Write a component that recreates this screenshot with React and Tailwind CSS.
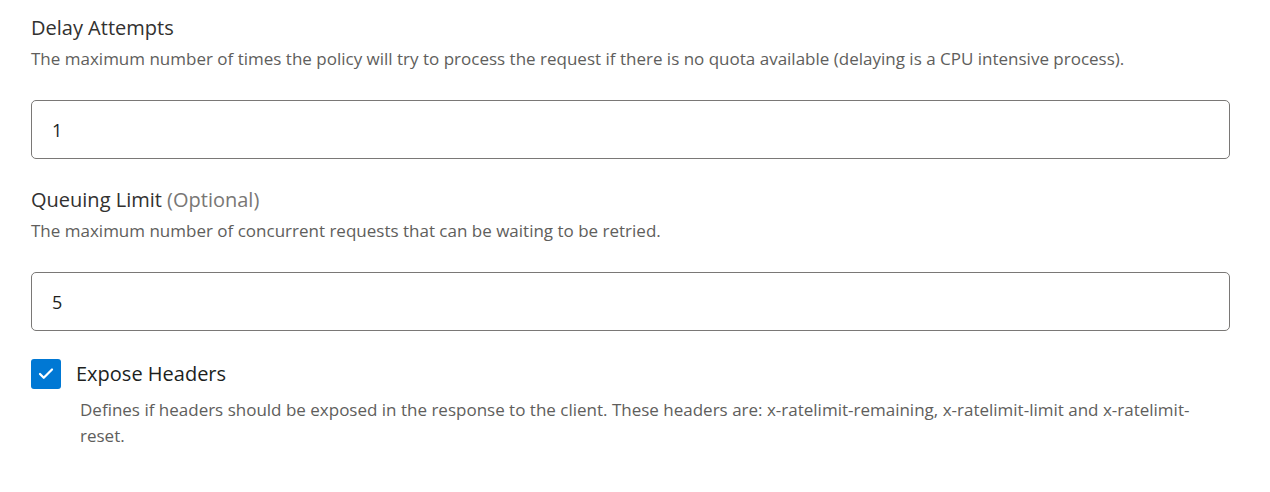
import { Check } from 'lucide-react';

const FONT = { fontFamily: '"Open Sans", "Noto Sans", sans-serif' };

function Field({ label, optional, help, value }) {
  return (
    <div className="flex flex-col">
      <label className="text-[20px] leading-[28px] text-[#323130]">
        {label}
        {optional && <span className="text-[#797775]"> (Optional)</span>}
      </label>
      <p className="mt-[4px] text-[17px] leading-[25px] text-[#605e5c]">{help}</p>
      <input
        readOnly
        value={value}
        className="mt-[29px] h-[59px] w-full rounded-[5px] border border-[#7a7876] bg-white px-[20px] text-[18px] text-[#201f1e] outline-none"
      />
    </div>
  );
}

export default function App() {
  return (
    <div className="min-h-[492px] bg-white pl-[31px] pr-[40px] pt-[14px]" style={FONT}>
      <Field
        label="Delay Attempts"
        help="The maximum number of times the policy will try to process the request if there is no quota available (delaying is a CPU intensive process)."
        value="1"
      />
      <div className="mt-[27px]">
        <Field
          label="Queuing Limit"
          optional
          help="The maximum number of concurrent requests that can be waiting to be retried."
          value="5"
        />
      </div>
      <div className="mt-[28px] flex items-center gap-[15px]">
        <span className="flex h-[30px] w-[30px] items-center justify-center rounded-[3px] bg-[#0078d4]">
          <Check className="text-white" size={18} strokeWidth={3} />
        </span>
        <span className="text-[20px] leading-[28px] text-[#201f1e]">Expose Headers</span>
      </div>
      <p className="ml-[49px] mt-[8px] text-[17px] leading-[26px] text-[#605e5c]">
        Defines if headers should be exposed in the response to the client. These headers are: x-ratelimit-remaining, x-ratelimit-limit and x-ratelimit-reset.
      </p>
    </div>
  );
}
